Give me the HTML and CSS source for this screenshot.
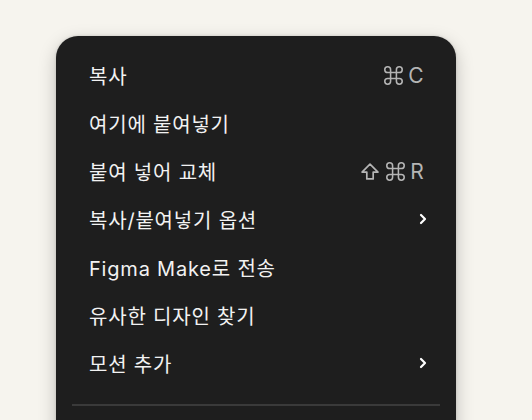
FILE: index.html
```html
<!DOCTYPE html>
<html lang="ko">
<head>
<meta charset="utf-8">
<link rel="stylesheet" href="styles.css">
</head>
<body>
<div class="stage">
  <div class="menu">
    <div class="item"><span class="label">복사</span><span class="shortcut"><svg class="cmd" viewBox="2.2 2.2 19.6 19.6" width="19" height="19"><path d="M15 6v12a3 3 0 1 0 3-3H6a3 3 0 1 0 3 3V6a3 3 0 1 0-3 3h12a3 3 0 1 0-3-3" fill="none" stroke="currentColor" stroke-width="1.6" stroke-linecap="round" stroke-linejoin="round"/></svg>C</span></div>
    <div class="item"><span class="label">여기에 붙여넣기</span></div>
    <div class="item"><span class="label">붙여 넣어 교체</span><span class="shortcut"><svg class="shift" viewBox="3.5 4 17 16" width="18" height="17"><path d="M9 19v-6.5H4.5L12 5l7.5 7.5H15V19H9z" fill="none" stroke="currentColor" stroke-width="1.6" stroke-linejoin="round"/></svg><svg class="cmd" viewBox="2.2 2.2 19.6 19.6" width="19" height="19"><path d="M15 6v12a3 3 0 1 0 3-3H6a3 3 0 1 0 3 3V6a3 3 0 1 0-3 3h12a3 3 0 1 0-3-3" fill="none" stroke="currentColor" stroke-width="1.6" stroke-linecap="round" stroke-linejoin="round"/></svg>R</span></div>
    <div class="item"><span class="label">복사/붙여넣기 옵션</span><svg class="chev" viewBox="0 0 8 12" width="8" height="12"><path d="M2 2 L6 6 L2 10" fill="none" stroke="currentColor" stroke-width="2.2" stroke-linecap="round" stroke-linejoin="round"/></svg></div>
    <div class="item"><span class="label">Figma Make로 전송</span></div>
    <div class="item"><span class="label">유사한 디자인 찾기</span></div>
    <div class="item"><span class="label">모션 추가</span><svg class="chev" viewBox="0 0 8 12" width="8" height="12"><path d="M2 2 L6 6 L2 10" fill="none" stroke="currentColor" stroke-width="2.2" stroke-linecap="round" stroke-linejoin="round"/></svg></div>
    <div class="sep"></div>
    <div class="more"></div>
  </div>
</div>
</body>
</html>
```
FILE: styles.css
```css
html, body {
  margin: 0;
  padding: 0;
  background: #f6f4ee;
  height: 100%;
  overflow: hidden;
}
.stage {
  padding: 36px 0 0 56px;
}
.menu {
  width: 400px;
  box-sizing: border-box;
  background: #1e1e1e;
  border-radius: 22px;
  padding: 15px 0 16px;
  box-shadow: 0 6px 18px rgba(0,0,0,0.22), 0 0 3px rgba(0,0,0,0.15);
  font-family: Inter, "Noto Sans CJK KR", "DejaVu Sans", sans-serif;
  font-size: 20px;
  color: #f2f2f2;
}
.item {
  height: 48px;
  display: flex;
  align-items: center;
  justify-content: space-between;
  padding: 0 32px 0 33px;
}
.label {
  letter-spacing: 0.8px;
}
.shortcut {
  display: flex;
  align-items: center;
  color: #b5b5b5;
  font-size: 21px;
  letter-spacing: 0.3px;
}
.cmd {
  margin-right: 5px;
}
.shift {
  margin-right: 7px;
}
.chev {
  color: #ffffff;
  margin-right: -3px;
}
.sep {
  height: 2px;
  background: #3a3a3a;
  margin: 17px 16px 16px;
}
.more {
  height: 60px;
}
```
